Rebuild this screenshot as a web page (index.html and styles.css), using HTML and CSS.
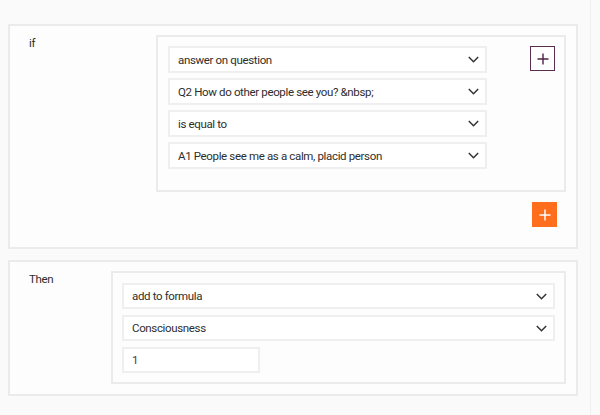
FILE: index.html
```html
<!DOCTYPE html>
<html lang="en">
<head>
    <meta charset="UTF-8">
    <meta name="viewport" content="width=device-width, initial-scale=1.0">
    <title>Rule editor</title>
    <link rel="stylesheet" href="styles.css">
</head>
<body>

<div class="page">

    <section class="block block-if">
        <div class="label label-if">if</div>
        <div class="block-body">
            <div class="group group-if">
                <div class="fields fields-if">
                    <div class="select">
                        <span>answer on question</span>
                        <svg class="chevron" width="11" height="7" viewBox="0 0 11 7"><path d="M0.8 1 L5.5 5.7 L10.2 1" fill="none" stroke="#333" stroke-width="1.5"/></svg>
                    </div>
                    <div class="select">
                        <span>Q2 How do other people see you? &amp;nbsp;</span>
                        <svg class="chevron" width="11" height="7" viewBox="0 0 11 7"><path d="M0.8 1 L5.5 5.7 L10.2 1" fill="none" stroke="#333" stroke-width="1.5"/></svg>
                    </div>
                    <div class="select">
                        <span>is equal to</span>
                        <svg class="chevron" width="11" height="7" viewBox="0 0 11 7"><path d="M0.8 1 L5.5 5.7 L10.2 1" fill="none" stroke="#333" stroke-width="1.5"/></svg>
                    </div>
                    <div class="select">
                        <span>A1 People see me as a calm, placid person</span>
                        <svg class="chevron" width="11" height="7" viewBox="0 0 11 7"><path d="M0.8 1 L5.5 5.7 L10.2 1" fill="none" stroke="#333" stroke-width="1.5"/></svg>
                    </div>
                </div>
                <button class="btn-add-condition" title="Add condition">
                    <svg width="12" height="12" viewBox="0 0 12 12"><path d="M6 0.5 V11.5 M0.5 6 H11.5" stroke="#4d2446" stroke-width="1.4"/></svg>
                </button>
            </div>
            <div class="block-actions">
                <button class="btn-add-group" title="Add group">
                    <svg width="12" height="12" viewBox="0 0 12 12"><path d="M6 0.5 V11.5 M0.5 6 H11.5" stroke="#fff" stroke-width="1.5"/></svg>
                </button>
            </div>
        </div>
    </section>

    <section class="block block-then">
        <div class="label label-then">Then</div>
        <div class="block-body">
            <div class="group group-then">
                <div class="select">
                    <span>add to formula</span>
                    <svg class="chevron" width="11" height="7" viewBox="0 0 11 7"><path d="M0.8 1 L5.5 5.7 L10.2 1" fill="none" stroke="#333" stroke-width="1.5"/></svg>
                </div>
                <div class="select">
                    <span>Consciousness</span>
                    <svg class="chevron" width="11" height="7" viewBox="0 0 11 7"><path d="M0.8 1 L5.5 5.7 L10.2 1" fill="none" stroke="#333" stroke-width="1.5"/></svg>
                </div>
                <input class="value" type="text" value="1">
            </div>
        </div>
    </section>

</div>

</body>
</html>
```

FILE: styles.css
```css
body {
    background-color: #fafafa;
    font-family: Roboto, "Liberation Sans", sans-serif;
    font-size: 11.5px;
    letter-spacing: -0.35px;
    color: #2e2e2e;
    margin: 0;
    padding: 0;
}

.page {
    width: 591px;
    box-sizing: border-box;
    min-height: 415px;
    padding: 24px 0 0 8px;
    display: flex;
    flex-direction: column;
    gap: 11px;
    border-right: 1px solid #f0f0f0;
}

.block {
    width: 570px;
    box-sizing: border-box;
    display: flex;
    background-color: #fdfdfd;
    border: 2px solid #ebebeb;
}

.block-if {
    padding: 9px 10px 20px 0;
}

.block-then {
    padding: 9px 10px 10px 0;
}

.label {
    padding-left: 19px;
    line-height: 16px;
    flex-shrink: 0;
}

.label-if {
    width: 127px;
}

.label-then {
    width: 82px;
}

.block-body {
    flex: 1;
    display: flex;
    flex-direction: column;
}

.group {
    border: 2px solid #ebebeb;
    background-color: #fdfdfd;
}

.group-if {
    display: flex;
    justify-content: space-between;
    align-items: flex-start;
    padding: 9px 9px 21px 10px;
}

.group-then {
    display: flex;
    flex-direction: column;
    gap: 6px;
    padding: 10px 9px 9px 9px;
}

.fields-if {
    display: flex;
    flex-direction: column;
    gap: 5px;
    width: 319px;
}

.select {
    height: 27px;
    box-sizing: border-box;
    border: 2px solid #efefef;
    background-color: #fff;
    display: flex;
    align-items: center;
    justify-content: space-between;
    padding: 0 6px 0 8px;
}

.group-then .select {
    height: 26px;
}

.chevron {
    display: block;
}

.value {
    width: 138px;
    height: 26px;
    box-sizing: border-box;
    border: 2px solid #efefef;
    background-color: #fff;
    font-family: Roboto, "Liberation Sans", sans-serif;
    font-size: 11.5px;
    color: #4a3848;
    padding: 0 8px;
    margin: 0;
}

button {
    padding: 0;
    margin: 0;
    cursor: pointer;
    display: flex;
    align-items: center;
    justify-content: center;
}

.btn-add-condition {
    width: 25px;
    height: 25px;
    border: 1.5px solid #5a2d52;
    background-color: #fff;
}

.block-actions {
    display: flex;
    justify-content: flex-end;
    padding: 10px 9px 0 0;
}

.btn-add-group {
    width: 25px;
    height: 25px;
    border: none;
    background-color: #ff6e1c;
}
```
